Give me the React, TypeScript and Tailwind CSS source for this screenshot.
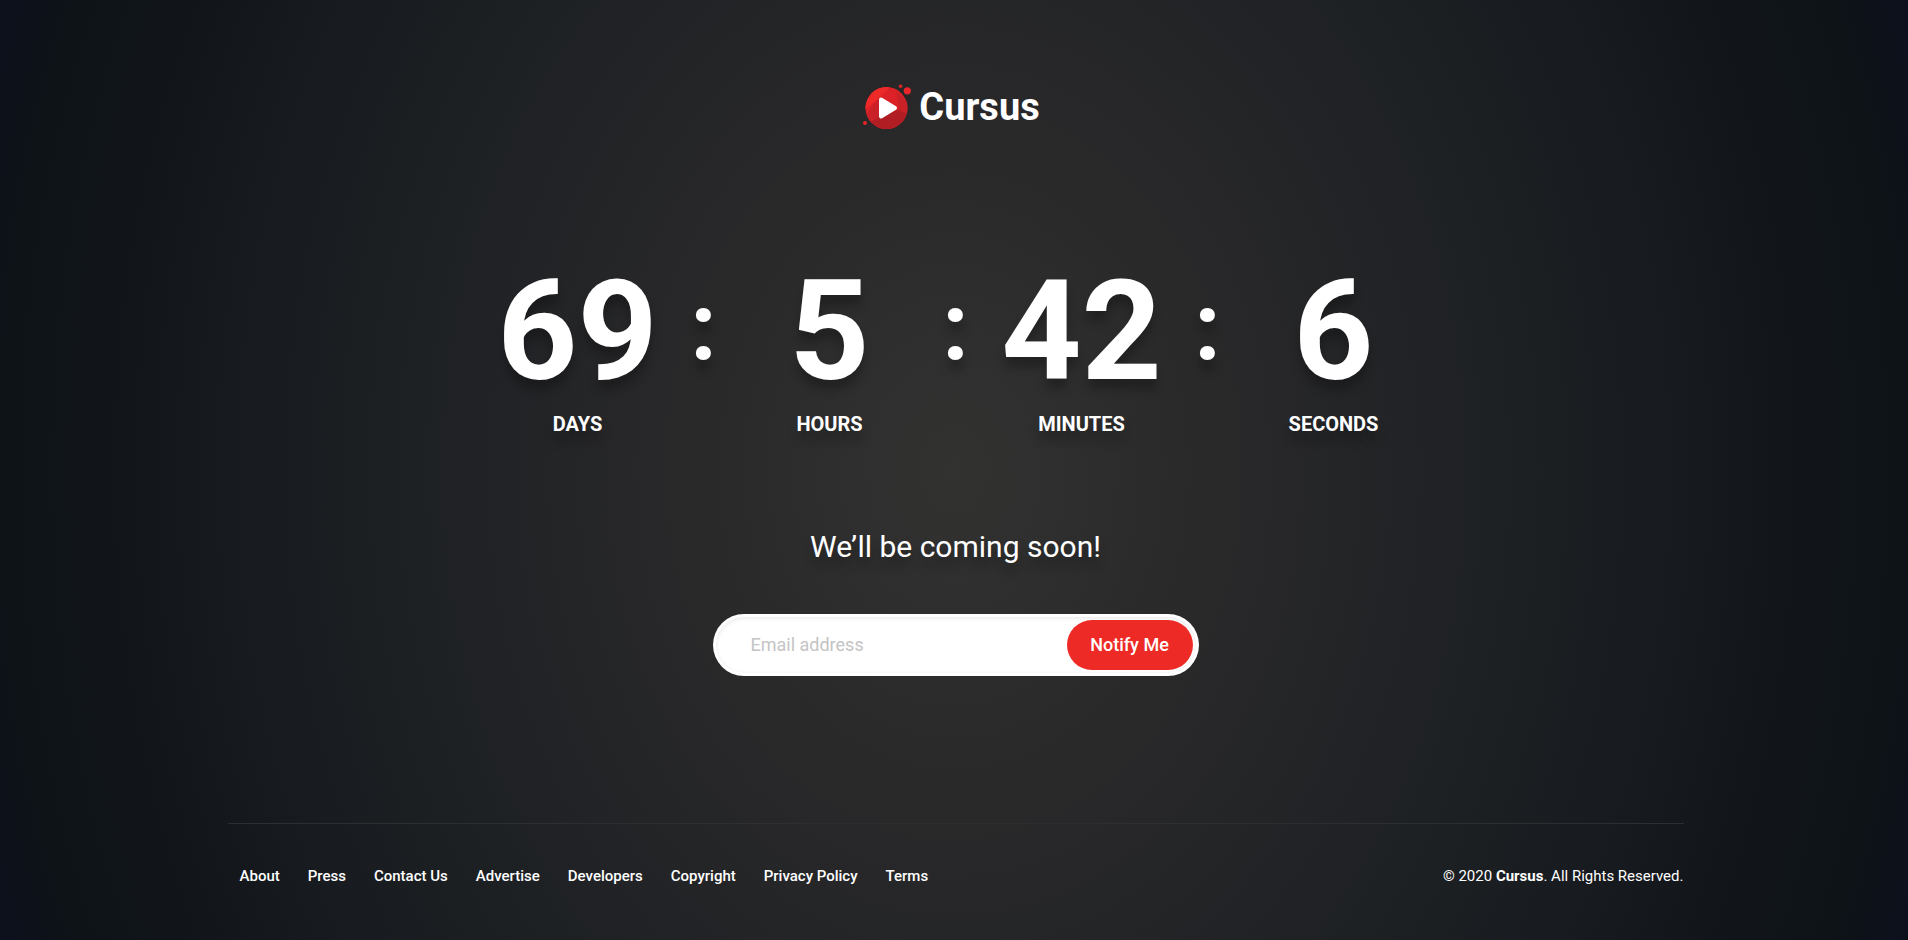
import React from "react";

const units = [
  { value: "69", label: "Days" },
  { value: "5", label: "Hours" },
  { value: "42", label: "Minutes" },
  { value: "6", label: "Seconds" },
];

const links = [
  "About",
  "Press",
  "Contact Us",
  "Advertise",
  "Developers",
  "Copyright",
  "Privacy Policy",
  "Terms",
];

function LogoMark() {
  return (
    <svg width="50" height="46" viewBox="0 0 50 46" aria-hidden="true">
      <defs>
        <clipPath id="disc">
          <circle cx="23.5" cy="24" r="21" />
        </clipPath>
      </defs>
      <circle cx="23.5" cy="24" r="21" fill="#dc2226" />
      <g clipPath="url(#disc)">
        <path d="M0 0H30L16 14L0 27Z" fill="#ee2a29" />
        <path d="M0 34L16 14L18 34L36 24L33 8L50 20V46H0Z" fill="#c92127" />
        <path d="M4 40L17 33L34 26L46 30V46H4Z" fill="#b01e24" />
      </g>
      <path
        d="M18 15.5L32 24L18 32.5Z"
        fill="#fff"
        stroke="#fff"
        strokeWidth="4"
        strokeLinejoin="round"
      />
      <circle cx="44.3" cy="6.8" r="3.6" fill="#ea2628" />
      <circle cx="37.6" cy="2.2" r="1.8" fill="#dc2428" />
      <circle cx="2" cy="39" r="2" fill="#e12528" />
    </svg>
  );
}

export default function App() {
  return (
    <div className="flex min-h-screen flex-col bg-[radial-gradient(ellipse_56%_145%_at_center,#323231_0%,#2e2e2e_11%,#29292a_24%,#222326_43%,#1c2023_53%,#181b1f_65%,#12161a_78%,#0e1317_88%,#0c111b_94%,#0b0f1a_100%)] pl-[3px] font-['Roboto',sans-serif] text-white">
      <main className="flex flex-1 flex-col items-center">
        <a href="#" className="mt-[84px] mr-2 flex h-[46px] items-center gap-1.5">
          <LogoMark />
          <span className="text-[38px] leading-[46px] font-bold">Cursus</span>
        </a>

        <div className="mt-[119px] grid w-full max-w-[1008px] grid-cols-4">
          {units.map((unit, i) => (
            <div key={unit.label} className="relative text-center [text-shadow:0_10px_10px_rgba(0,0,0,0.25)]">
              <div className="text-[140px] leading-[164px] font-bold">{unit.value}</div>
              <div className="text-xl leading-[22px] font-bold uppercase">{unit.label}</div>
              {i < units.length - 1 && (
                <span className="absolute top-[22px] right-0 translate-x-1/2 text-[94px] leading-[112px] font-bold">
                  :
                </span>
              )}
            </div>
          ))}
        </div>

        <h1 className="mt-[94px] text-3xl leading-9 [text-shadow:0_10px_10px_rgba(0,0,0,0.25)]">
          We’ll be coming soon!
        </h1>

        <form
          className="mt-[49px] flex h-[62px] w-full max-w-[486px] rounded-full bg-white p-[3px]"
          onSubmit={(e) => e.preventDefault()}
        >
          <div className="flex flex-1 rounded-full p-[3px] shadow-[inset_0_1px_4px_rgba(0,0,0,0.1)]">
            <input
              type="email"
              aria-label="Email address"
              placeholder="Email address"
              className="min-w-0 flex-1 bg-transparent px-8 text-lg text-gray-800 outline-none placeholder:text-[#c4c4c4]"
            />
            <button type="submit" className="w-[126px] rounded-full bg-[#ed2a26] text-lg font-medium">
              Notify Me
            </button>
          </div>
        </form>
      </main>

      <footer className="mx-auto w-full max-w-[1456px] pb-[52px]">
        <div className="flex items-center justify-between border-t border-[#2d2e30] pt-10">
          <nav className="flex gap-7 pl-3 text-[15px] leading-6 font-medium">
            {links.map((link) => (
              <a key={link} href="#">
                {link}
              </a>
            ))}
          </nav>
          <p className="text-[15px] leading-6">
            © 2020 <strong className="font-bold">Cursus</strong>. All Rights Reserved.
          </p>
        </div>
      </footer>
    </div>
  );
}
